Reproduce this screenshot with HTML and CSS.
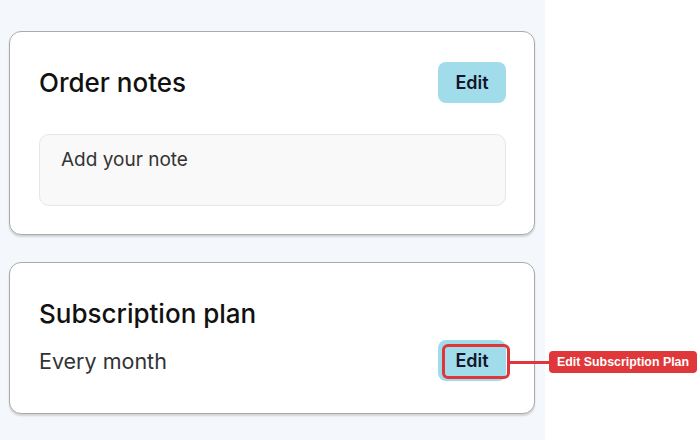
FILE: index.html
```html
<!DOCTYPE html>
<html lang="en">
<head>
    <meta charset="UTF-8">
    <meta name="viewport" content="width=device-width, initial-scale=1.0">
    <title>Checkout details</title>
    <link rel="stylesheet" href="styles.css">
</head>
<body>
    <div class="panel">
        <div class="card">
            <div class="card-header">
                <h2>Order notes</h2>
                <button class="edit-btn">Edit</button>
            </div>
            <div class="note-box">Add your note</div>
        </div>

        <div class="card card-plan">
            <div class="card-header">
                <h2>Subscription plan</h2>
            </div>
            <div class="plan-row">
                <span class="plan-value">Every month</span>
                <div class="btn-wrap">
                    <button class="edit-btn">Edit</button>
                    <!-- annotation overlay -->
                    <div class="highlight"></div>
                    <div class="connector"></div>
                    <div class="callout">Edit Subscription Plan</div>
                </div>
            </div>
        </div>
    </div>
</body>
</html>
```

FILE: styles.css
```css
* {
    margin: 0;
    padding: 0;
    box-sizing: border-box;
}

body {
    font-family: Inter, 'Noto Sans', sans-serif;
    background: #ffffff;
    color: #111;
    width: 700px;
    height: 440px;
    overflow: hidden;
}

.panel {
    width: 545px;
    height: 440px;
    background: #f4f8fc;
    padding: 31px 10px 0 9px;
    display: flex;
    flex-direction: column;
    gap: 27px;
}

.card {
    background: #fff;
    border: 1.5px solid #aaaaaa;
    border-radius: 12px;
    box-shadow: 0 2px 2px rgba(0, 0, 0, 0.15);
    padding: 30px 28px 28px 29px;
}

.card-header {
    display: flex;
    align-items: center;
    justify-content: space-between;
    min-height: 41px;
}

.card-header h2 {
    font-size: 26px;
    font-weight: 500;
    color: #111;
}

.edit-btn {
    font-family: Inter, 'Noto Sans', sans-serif;
    background: #a0dcea;
    color: #14142b;
    border: none;
    border-radius: 8px;
    width: 68px;
    height: 41px;
    font-size: 18px;
    font-weight: 600;
    cursor: pointer;
}

.note-box {
    margin-top: 31px;
    height: 72px;
    background: #f9f9f9;
    border: 1px solid #e6e6e6;
    border-radius: 10px;
    padding: 13px 21px;
    font-size: 19px;
    color: #333;
}

.card-plan {
    padding-bottom: 32px;
}

.plan-row {
    display: flex;
    align-items: center;
    justify-content: space-between;
    margin-top: 6px;
}

.plan-value {
    font-size: 21.5px;
    color: #333;
}

.btn-wrap {
    position: relative;
    height: 41px;
}

.highlight {
    position: absolute;
    left: 4px;
    right: -4px;
    top: 4px;
    bottom: 2px;
    border: 3px solid #e0353a;
    border-radius: 6px;
}

.connector {
    position: absolute;
    left: 72px;
    top: 21px;
    width: 39px;
    height: 2.5px;
    background: #e0353a;
}

.callout {
    position: absolute;
    left: 111px;
    top: 11px;
    width: 148px;
    height: 22px;
    background: #e0383a;
    border-radius: 4px;
    color: #fff;
    font-family: 'Liberation Sans', Arial, sans-serif;
    font-size: 12.4px;
    font-weight: bold;
    line-height: 22px;
    text-align: center;
    white-space: nowrap;
}
```
